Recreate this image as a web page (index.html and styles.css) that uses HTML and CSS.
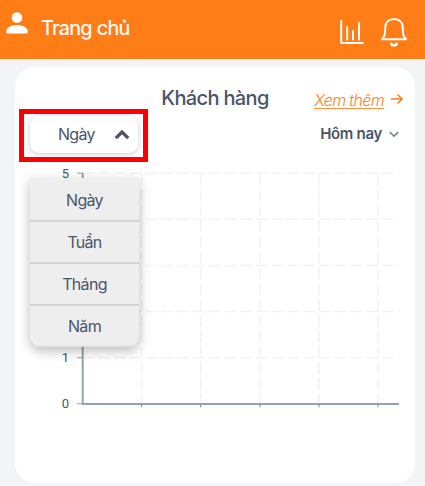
FILE: index.html
```html
<!DOCTYPE html>
<html lang="vi">
<head>
<meta charset="utf-8">
<title>Trang chủ</title>
<link rel="stylesheet" href="styles.css">
</head>
<body>
<header class="topbar">
  <svg class="user-icon" width="22" height="22" viewBox="0 0 22 22" fill="#fff"><circle cx="11" cy="5.6" r="5.3"/><path d="M.3 19.5C.3 15.5 5 13 11 13s10.700 2.500 10.700 6.500c0 1.600-.5 2.100-1.700 2.100H2C.8 21.600.3 21.100.3 19.500z"/></svg>
  <h1 class="page-title">Trang chủ</h1>
  <svg class="stats-icon" width="24" height="24" viewBox="0 0 24 24" fill="none" stroke="#fff" stroke-width="2" stroke-linecap="round" stroke-linejoin="round"><path d="M1.200 1v22H23M7.200 7v12.500M13 11v8.500M19 3v16.500"/></svg>
  <svg class="bell-icon" width="28" height="31" viewBox="0 0 28 31" fill="none" stroke="#fff" stroke-width="2" stroke-linecap="round" stroke-linejoin="round"><path d="M2 22.200H26C23.200 19.500 22.800 17.500 22.800 13.500V10.800C22.800 5.500 19.500 2 14 2S5.200 5.500 5.200 10.800V13.500C5.200 17.500 4.800 19.500 2 22.200z"/><path d="M11.500 26.800C12 29 16 29 16.500 26.800" stroke-width="2.700"/></svg>
</header>
<main class="card">
  <div class="heading">
    <h2 class="card-title">Khách hàng</h2>
    <a class="more"><span class="more-text">Xem thêm</span><svg class="arrow" width="13" height="12" viewBox="0 0 13 12"><path d="M1 6H12M7.500 1.500L12 6L7.500 10.500"/></svg></a>
  </div>
  <div class="filters">
    <div class="highlight">
      <button class="select"><span class="select-text">Ngày</span><svg class="caret" width="16" height="11" viewBox="0 0 16 11"><path d="M1.800 9.200L8 3L14.200 9.200"/></svg></button>
      <ul class="menu">
        <li>Ngày</li>
        <li>Tuần</li>
        <li>Tháng</li>
        <li>Năm</li>
      </ul>
    </div>
    <div class="period"><span>Hôm nay</span><svg class="chevron" width="10" height="7" viewBox="0 0 10 7"><path d="M.8 1.200L5 5.200L9.200 1.200"/></svg></div>
  </div>
  <svg class="chart" width="400" height="321" viewBox="15 162 400 321">
    <path class="grid" d="M82.700 173.200H399M82.700 219.200H399M82.700 265.400H399M82.700 311.600H399M82.700 357.700H399"/>
    <path class="grid" d="M141.600 173.200V404M200.700 173.200V404M259.900 173.200V404M319 173.200V404M378 173.200V404"/>
    <path class="ticks" d="M77 173.200H83M77 219.200H83M77 265.400H83M77 311.600H83M77 357.700H83M77 403.700H83"/>
    <path class="axis" d="M82.700 173V404H399"/>
    <path class="ticks dark" d="M141.600 404.500V407.300M200.700 404.500V407.300M259.900 404.500V407.300M319 404.500V407.300M378 404.500V407.300"/>
    <g class="labels">
      <text x="69" y="178">5</text>
      <text x="69" y="362.300">1</text>
      <text x="69" y="408.400">0</text>
    </g>
  </svg>
</main>
</body>
</html>
```

FILE: styles.css
```css
* { box-sizing: border-box; }

body {
  margin: 0;
  height: 486px;
  overflow: hidden;
  background: #f3f4f6;
  color: #4a5568;
  font-family: Inter, "Noto Sans", sans-serif;
}

h1, h2, ul { margin: 0; padding: 0; font-weight: 400; }
svg { display: block; flex: none; }

.topbar {
  display: flex;
  align-items: flex-start;
  height: 59.4px;
  padding-left: 6px;
  background: #ff7d17;
  color: #fff;
}

.user-icon { margin-top: 12px; }

.page-title {
  width: 299px;
  margin: 15px 0 0 13px;
  font-size: 20px;
  line-height: 26px;
  letter-spacing: -0.75px;
  -webkit-text-stroke: 0.2px;
}

.stats-icon { margin-top: 20px; }
.bell-icon { margin: 17px 0 0 16px; }

.card {
  width: 400px;
  height: 416px;
  margin: 7.600px 0 0 15px;
  border-radius: 20px;
  background: #fff;
}

.heading {
  display: grid;
  grid-template-columns: 1fr auto 1fr;
  height: 42px;
  padding: 0 12px;
}

.card-title {
  grid-column: 2;
  padding-top: 17px;
  font-size: 20px;
  font-weight: 500;
  line-height: 28px;
  letter-spacing: -0.65px;
}

.more {
  display: flex;
  justify-content: flex-end;
  gap: 6px;
  padding-top: 24px;
  color: #ff7d17;
}

.more-text {
  height: 18px;
  border-bottom: 1px solid #ff8f38;
  font-size: 16px;
  font-style: italic;
  font-weight: 300;
  line-height: 18px;
  letter-spacing: -0.65px;
  white-space: nowrap;
}

.arrow { margin-top: 2px; fill: none; stroke: #ff7d17; stroke-width: 1.500; }

.filters {
  display: flex;
  justify-content: space-between;
  height: 53px;
  padding: 0 16px 0 4px;
}

.highlight {
  position: relative;
  width: 129px;
  height: 53px;
  border: 5px solid #f00;
}

.select {
  display: flex;
  align-items: center;
  width: 108px;
  height: 37px;
  margin: 2px 0 0 6px;
  padding: 0 8px 0 28px;
  justify-content: space-between;
  border: 0;
  border-radius: 9px;
  background: #fff;
  box-shadow: 0 1px 5px rgba(0, 0, 0, .22);
  color: #4a5568;
  font: 400 16px/20px Inter, "Noto Sans", sans-serif;
  letter-spacing: -0.7px;
}

.caret { fill: none; stroke: #4a5568; stroke-width: 3.300; }

.menu {
  position: absolute;
  top: 64px;
  left: 6px;
  width: 109px;
  border-radius: 0 0 11px 11px;
  background: #eee;
  box-shadow: 0 4px 12px rgba(0, 0, 0, .27);
  overflow: hidden;
  list-style: none;
}

.menu li {
  height: 42px;
  border-bottom: 2px solid #d4d4d4;
  font-size: 16px;
  font-weight: 400;
  letter-spacing: -0.7px;
  line-height: 40px;
  text-align: center;
}

.menu li:first-child { height: 44px; line-height: 45px; }
.menu li:last-child { height: 41px; border-bottom-color: #e3e3e3; }

.period {
  display: flex;
  gap: 7px;
  height: 20px;
  margin-top: 15px;
  font-size: 15px;
  font-weight: 600;
  line-height: 20px;
  letter-spacing: -0.3px;
}

.chevron { margin-top: 7px; fill: none; stroke: #7b879b; stroke-width: 1.700; }

.grid { fill: none; stroke: #f1f3f3; stroke-width: 1.500; stroke-dasharray: 11.8 3.950; }
.axis { fill: none; stroke: #90a4ae; stroke-width: 2; }
.ticks { fill: none; stroke: #90a4ae; stroke-width: 1; }
.dark { stroke: #7c8588; }
.labels { fill: #455a64; font-family: Roboto, sans-serif; font-size: 13px; text-anchor: end; }
```
